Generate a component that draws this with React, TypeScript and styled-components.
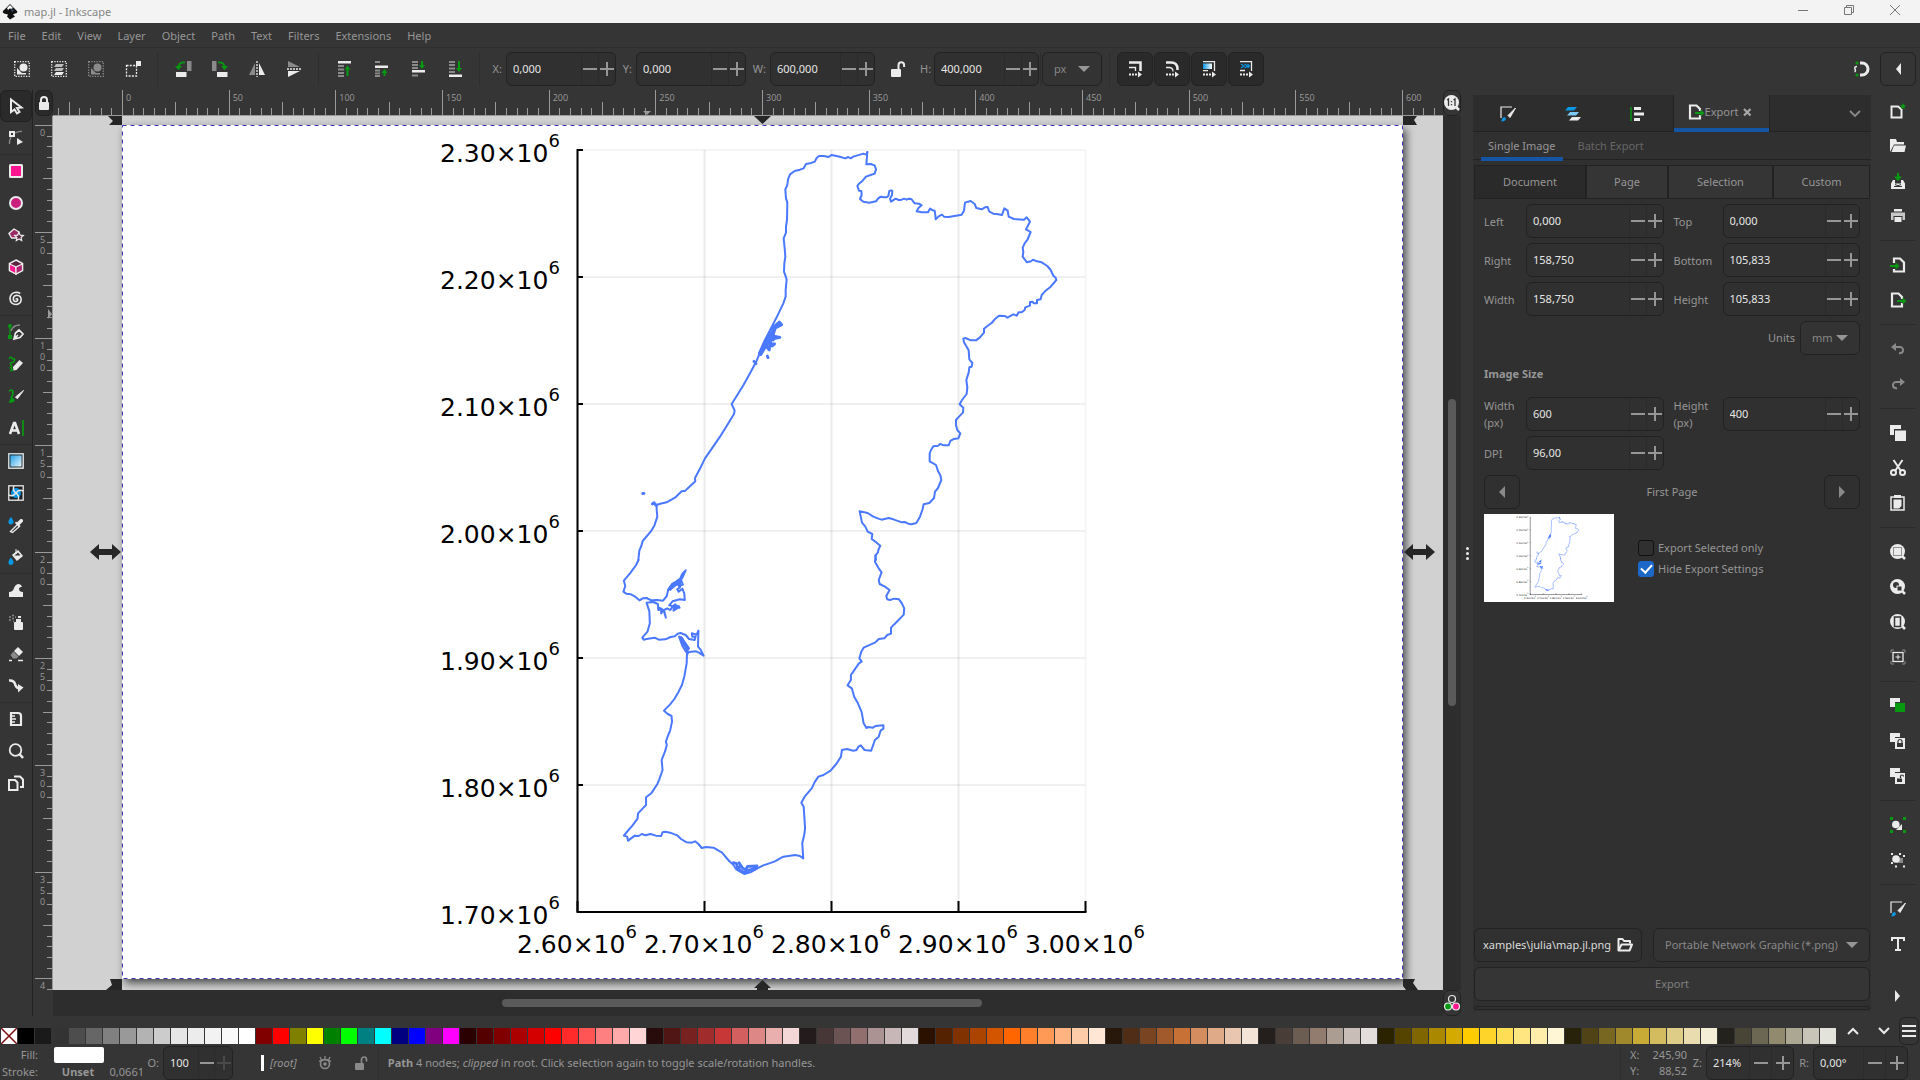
import React, { useEffect, useRef } from 'react';
import styled, { createGlobalStyle } from 'styled-components';

const W = '#ebebeb';
const D = '#8a8a8a';
const G = '#079a10';
const B = '#0a98e6';
const L = '#7cc8f2';
const P = '#ff158f';
const BG = '#353535';

const GlobalStyle = createGlobalStyle`
  * { box-sizing: border-box; }
  body { margin: 0; background: ${BG}; overflow: hidden; }
  body, button, input, select { font-family: "Noto Sans", "Open Sans", sans-serif; font-size: 11px; line-height: 16px; color: #969696; }
  button, input, select { margin: 0; padding: 0; border: 0; background: none; outline: 0; }
  svg { display: block; flex: none; }
`;

/* ---------- icons ---------- */

const lens = (inner: React.ReactNode) => (
  <>
    <circle cx="7.5" cy="7.500" r="7.500" fill={W} />
    <path d="M12 12l3 3" stroke={W} strokeWidth="2.500" />
    {inner}
  </>
);
const brushPaper = (
  <>
    <path d="M1 12V1h11" fill="none" stroke={W} strokeWidth="1.200" />
    <path d="M15.500 2L8 9.500l2 2z" fill={W} stroke={W} />
    <path d="M1.500 15.500q0-4 3-4.500l1.500 1.500q-.5 3-4.500 3z" fill={B} />
  </>
);
const clone = (inner: React.ReactNode) => (
  <>
    <path d="M0 0h10v4H5v5H0z" fill={W} />
    {inner}
  </>
);

const icons: Record<string, React.ReactNode> = {
  selectAll: (<><rect x=".7" y=".7" width="14.600" height="14.600" fill="none" stroke={W} strokeWidth="1.300" strokeDasharray="1.300 1.300" /><path d="M3 7l5 5h4v1.500H3z" fill={W} /><circle cx="9.500" cy="6.500" r="4" fill={W} /></>),
  selectLayers: (<><rect x=".7" y=".7" width="14.600" height="14.600" fill="none" stroke={W} strokeWidth="1.300" strokeDasharray="1.300 1.300" /><path d="M5 3h8l-2 3H3zM5 7h8l-2 3H3z" fill="#bbb" /><path d="M5 11h8l-2 3H3z" fill={W} /></>),
  deselect: (<><rect x=".7" y=".7" width="14.600" height="14.600" fill="none" stroke={D} strokeWidth="1.300" strokeDasharray="1.300 1.300" /><path d="M3 7l5 5h4v1.500H3z" fill={D} /><circle cx="9.500" cy="6.500" r="4" fill={D} /></>),
  touch: (<><rect x="1.500" y="4.500" width="10" height="10.500" fill="none" stroke={W} strokeWidth="1.300" strokeDasharray="2 1.300" /><rect x="11" y="0" width="5" height="5" fill={W} /></>),
  rotateL: (<><rect x="12" y="0" width="4.500" height="10" fill={D} /><rect x="1" y="11" width="10.500" height="5" fill={W} /><path d="M10 1.500Q4 1 3.500 6" fill="none" stroke={G} strokeWidth="1.800" /><path d="M0 5h7L3.500 9z" fill={G} /></>),
  rotateR: (<><rect x="0" y="0" width="4.500" height="10" fill={D} /><rect x="5" y="11" width="10.500" height="5" fill={W} /><path d="M6 1.500Q12 1 12.500 6" fill="none" stroke={G} strokeWidth="1.800" /><path d="M9 5h7l-3.500 4z" fill={G} /></>),
  flipH: (<><path d="M6 2v12H0z" fill={D} /><path d="M10 2v12h6z" fill={W} /><path d="M8 0v16" stroke={W} strokeWidth="1.300" strokeDasharray="2 1" /></>),
  flipV: (<><path d="M2 0v6h12z" fill={D} /><path d="M2 10v6l12-6z" fill={W} /><path d="M1 8h15" stroke={W} strokeWidth="1.300" strokeDasharray="2 1" /></>),
  top: (<><rect x="2" y="0" width="13" height="2.500" fill={W} /><path d="M2 5h6M2 8.500h6M2 12h6M2 15h6" stroke={D} strokeWidth="1.800" /><path d="M11.500 15V7" stroke={G} strokeWidth="2" /><path d="M8.500 8.500l3-4 3 4z" fill={G} /></>),
  raise: (<><rect x="2" y="4.500" width="13" height="2.500" fill={W} /><path d="M2 1h5M2 9.500h5M2 12.300h5M2 15h5" stroke={D} strokeWidth="1.800" /><path d="M11.500 15v-4" stroke={G} strokeWidth="2" /><path d="M8.500 12l3-4 3 4z" fill={G} /></>),
  lower: (<><rect x="2" y="9" width="13" height="2.500" fill={W} /><path d="M2 1h6M2 4h6M2 7h6M2 14.500h6" stroke={D} strokeWidth="1.800" /><path d="M12 0v4" stroke={G} strokeWidth="2" /><path d="M9 4l3 4 3-4z" fill={G} /></>),
  bottom: (<><rect x="2" y="13.500" width="13" height="2.500" fill={W} /><path d="M2 1h6M2 4h6M2 7.500h6M2 11h6" stroke={D} strokeWidth="1.800" /><path d="M12 0v8" stroke={G} strokeWidth="2" /><path d="M9 7l3 4 3-4z" fill={G} /></>),
  lock: (<><rect x="3" y="7" width="10" height="8" rx="1" fill={W} /><path d="M5 7V5a3 3 0 016 0v2" fill="none" stroke={W} strokeWidth="2" /></>),
  unlock: (<><rect x="1" y="8" width="10" height="8" rx="1" fill={W} /><path d="M8.500 8V4a2.800 2.800 0 015.600 0v2" fill="none" stroke={W} strokeWidth="2" /></>),
  scaleStroke: (<><path d="M2 1.500h11.500V10" fill="none" stroke={W} strokeWidth="2.500" /><path d="M2 6.500h6.500V10" fill="none" stroke={W} strokeWidth="1.300" /><path d="M2 13.500h9" stroke={W} strokeWidth="2" strokeDasharray="2 1" /><path d="M11 10.500v6l4-3z" fill={W} /></>),
  scaleCorners: (<><path d="M2 1.500h5q6.500 0 6.500 6.500v1" fill="none" stroke={W} strokeWidth="2.500" /><path d="M2 6.500h3q4 0 4 4" fill="none" stroke={W} strokeWidth="1.300" /><path d="M2 13.500h9" stroke={W} strokeWidth="2" strokeDasharray="2 1" /><path d="M11 10.500v6l4-3z" fill={W} /></>),
  scaleGradient: (<><defs><linearGradient id="gs"><stop stopColor={B} /><stop offset="1" stopColor="#fff" /></linearGradient></defs><rect x="2" y="2.500" width="9" height="5.500" fill="url(#gs)" /><path d="M2 .7h11.500V10M2 9.700h5" fill="none" stroke={W} strokeWidth="1.300" /><path d="M2 13.500h9" stroke={W} strokeWidth="2" strokeDasharray="2 1" /><path d="M11 10.500v6l4-3z" fill={W} /></>),
  scalePattern: (<><path d="M3 3l3 2-3 2M6.500 3l3 2-3 2M9.500 3l2 2-2 2" fill="none" stroke={B} strokeWidth="1.200" /><path d="M2 .7h11.500V10M2 9.500h5" fill="none" stroke={W} strokeWidth="1.300" /><path d="M2 13.500h9" stroke={W} strokeWidth="2" strokeDasharray="2 1" /><path d="M11 10.500v6l4-3z" fill={W} /></>),
  snap: (<><path d="M7 2h2a6 6 0 010 12H7" fill="none" stroke={W} strokeWidth="3" /><circle cx="4" cy="2" r="1.600" fill={G} /><circle cx="4" cy="14" r="1.600" fill={G} /><path d="M4 5.500Q1 5.500 2 8t-.5 2.800" fill="none" stroke={W} strokeWidth="1.500" /></>),
  left: <path d="M11 2v12L6 8z" fill={W} />,
  right: <path d="M5 2v12l5-6z" fill={W} />,
  leftDim: <path d="M11 2v12L5 8z" fill={D} />,
  rightDim: <path d="M5 2v12l6-6z" fill={D} />,
  pointer: <path d="M3 1.500l10.500 8-4.500.5 2.500 4-2.500 1.500-2.500-4L3 14z" fill="none" stroke={W} strokeWidth="2" />,
  node: (<><rect x="2" y="2" width="4" height="4" fill="none" stroke={W} strokeWidth="2" /><path d="M7 3q4-2 7-1.500M3 7q-2 4-1.500 7" fill="none" stroke={D} strokeWidth="1.300" /><path d="M9 8l6 4-6 3z" fill={W} /></>),
  rect: <rect x="2" y="2" width="12" height="12" rx=".5" fill={P} stroke={W} strokeWidth="2" />,
  ellipse: <circle cx="8" cy="8" r="6" fill="#c8207c" stroke={W} strokeWidth="2" />,
  star: (<><path d="M6 2l5 3-1.500 6H3.500L1 6.500z" fill="#9c2868" stroke={W} strokeWidth="1.400" /><path d="M11 5.500l1.300 2.700 3 .3-2.200 2 .6 3-2.700-1.500-2.700 1.500.6-3-2.200-2 3-.3z" fill="#5c2440" stroke={W} strokeWidth="1.200" /></>),
  box: (<><path d="M8 1l6.500 3.500v7L8 15l-6.500-3.500v-7z" fill="#5c2440" stroke={W} strokeWidth="1.500" /><path d="M1.500 5L8 8v7l-6.500-3.500z" fill={P} stroke={W} strokeWidth="1.200" /><path d="M14.500 5L8 8v7l6.500-3.500z" fill="#b42474" stroke={W} strokeWidth="1.200" /></>),
  spiral: <path d="M8 8.500q0-1 1-.7 1.600 1-.2 2.400-2.800 1-3.500-1.700-.2-3.600 3.400-4.200 4.300.2 4.500 4.200-.3 4.600-5 5-5.700-.3-6.200-5.500Q2.200 1.800 8 1.300q2.500 0 4.200 1.200" fill="none" stroke={W} strokeWidth="1.600" />,
  pen: (<><path d="M2 4v8" stroke={G} strokeWidth="1.300" /><rect x="0" y="11" width="4" height="4" fill={G} /><circle cx="2" cy="2" r="2" fill={G} /><path d="M3 7q2-6 9-6" fill="none" stroke={D} strokeWidth="1.300" /><path d="M6 15l1.500-6L11 6l4 4-3 3.500zM6 15l4-4" fill="none" stroke={W} strokeWidth="1.700" /></>),
  pencil: (<><path d="M1 3q1.500-3 3-1t2.500 1Q7 6 4 6.500t-1 2.500-1.500 3" fill="none" stroke={G} strokeWidth="1.500" /><path d="M2 16l1-4.500L6 14z" fill={G} /><path d="M5 11l6.500-7L15 7l-6.500 7-3 .5z" fill={W} /></>),
  calligraphy: (<><path d="M1 3q4-2 4 1t-2 7" fill="none" stroke={G} strokeWidth="1.800" /><path d="M1 15q0-4 4-5l2 2q-1 3-6 3z" fill={G} /><path d="M15.500 2.500L7.500 9l1.800 1.800z" fill={W} stroke={W} /></>),
  text: (<><path d="M2 14L6 3h1l4 11M3.500 10.500h6" fill="none" stroke={W} strokeWidth="2.600" /><path d="M15 0v16" stroke={G} strokeWidth="1.700" /></>),
  gradient: (<><defs><linearGradient id="gt" x2="1" y2="1"><stop stopColor={B} /><stop offset="1" stopColor="#fff" /></linearGradient></defs><rect x=".8" y=".8" width="14.400" height="14.400" fill="url(#gt)" stroke={W} strokeWidth="1.300" /><rect x="2" y="2" width="12" height="12" fill="none" stroke={BG} /></>),
  mesh: (<><rect x=".8" y=".8" width="14.400" height="14.400" fill="#222" stroke={W} strokeWidth="1.300" /><circle cx="8" cy="8" r="5" fill={B} /><path d="M8 8q-4-3-2-7M8 8q3-4 7-2M8 8q4 3 2 7M8 8q-3 4-7 2" fill="none" stroke={W} strokeWidth="1.400" /></>),
  dropper: (<><path d="M3 0q3 4 2.500 5.500T3 7.500.5 5.500 3 0z" fill={B} /><path d="M2.500 14.500l7-7 2 2-7 6z" fill="none" stroke={W} strokeWidth="1.300" /><path d="M9 5.500L12.500 2q3-.5 2.500 2.500L11.500 8l1 1-1.500 1L7 6l1-1.500z" fill={W} /></>),
  bucket: (<><path d="M3 8.500q3 4 2.500 5.500T3 16 .5 14 3 8.500z" fill={B} /><path d="M5 6l5-4 4 5-5 4z" fill={W} stroke={W} strokeWidth="1.500" /><path d="M6.500 6.500h6L10 3.500z" fill={BG} /><path d="M8 0v5" stroke={W} /></>),
  tweak: <path d="M1 15V10q4 0 5-4 1.500-4 5-4 2.500.5 3 3-2.500-.5-3 1.500 0 3.500 4 3.500V15z" fill={W} />,
  spray: (<><rect x="6" y="8" width="9" height="8" rx="1" fill={W} /><rect x="8" y="5" width="5" height="3" fill={W} /><rect x="10" y="2" width="3" height="2" fill={W} /><path d="M1 3h2M4 1.500h2M1 6h2M4 4.500h2M5 7.500h1M7 3h1" stroke={D} strokeWidth="1.500" /></>),
  eraser: (<><path d="M10 1l5 5-4 4-5-5z" fill={W} /><path d="M5.500 5.500l5 5-2 2H5L2.500 9z" fill={D} /><path d="M1 14.500h3M10 14.500h5" stroke={W} strokeWidth="1.600" /></>),
  connector: (<><path d="M1 2.500Q6 2 7 6t4 4.500" fill="none" stroke={W} strokeWidth="2.500" /><path d="M10 6v8.500l5.500-5z" fill={W} /></>),
  measure: (<><path d="M3 2h7q3 0 3 3v9H3z" fill="none" stroke={W} strokeWidth="2.200" /><path d="M3 5h4M3 8h5M3 11h4" stroke={W} strokeWidth="1.300" /></>),
  zoom: (<><circle cx="7.500" cy="7" r="5.800" fill="none" stroke={W} strokeWidth="1.800" /><path d="M11.500 11l3.500 4" stroke={W} strokeWidth="2.500" /></>),
  pages: (<><path d="M1 5h6l2.500 2.500V15H1z" fill="none" stroke={W} strokeWidth="2" /><path d="M6 1.500h6l3 3V12h-3" fill="none" stroke={W} strokeWidth="2" /></>),
  fillStroke: brushPaper,
  layers: (<><path d="M3 1h9l-3 3.500H0z" fill={B} /><path d="M5 6h9l-3 3.500H2z" fill={L} /><path d="M7 11h9l-3 3.500H4z" fill={W} /></>),
  align: (<><path d="M1 1v14" stroke={G} strokeWidth="1.400" /><rect x="4" y="1" width="7" height="3" fill={W} /><rect x="4" y="6.500" width="10" height="3" fill={W} /><rect x="4" y="12" width="6" height="3" fill={W} /></>),
  exportPage: (<><path d="M12 11v3.500H2v-13h6.500L12 5v2" fill="none" stroke={W} strokeWidth="2.200" /><path d="M7 9h6" stroke={G} strokeWidth="2" /><path d="M12.500 5.500l4 3.500-4 3.500z" fill={G} /></>),
  importPage: (<><path d="M4 6V1.500h6l4 4v9H4V12" fill="none" stroke={W} strokeWidth="2.200" /><path d="M0 9h6" stroke={G} strokeWidth="2" /><path d="M5.500 5.500l4 3.500-4 3.500z" fill={G} /></>),
  newDoc: (<><path d="M1.500 3.500H8l3.500 3v8H1.500z" fill="none" stroke={W} strokeWidth="2" /><path d="M13 0l.9 2 2.100.2-1.500 1.500.5 2.300-2-1-2 1 .5-2.300L10 2.200l2.100-.2z" fill={G} /></>),
  folder: (<><path d="M0 14V1h6l1 3h7v2.500H4z" fill={W} /><path d="M4 7.500h12L14.500 14H1.500z" fill={W} /></>),
  save: (<><path d="M8 0v4" stroke={G} strokeWidth="2" /><path d="M4 3.500h8L8 8z" fill={G} /><path d="M3 7L1 10.500V16h14v-5.500L13 7h-2v3.500H5V7z" fill={W} /><path d="M5 11.500q3 2.500 6 0M4 13.500h8" fill="none" stroke={BG} /></>),
  print: (<><rect x="4" y="1" width="8" height="2.500" fill={W} /><path d="M1 4.500h14V12H1z" fill="#c8c8c8" /><rect x="4" y="8.500" width="8" height="6" fill={W} stroke={BG} /></>),
  undo: (<><path d="M4 6h6q3.500.5 3 4-.5 2-4 2.500" fill="none" stroke={D} strokeWidth="2" /><path d="M6 2v8L1 6z" fill={D} /></>),
  redo: (<><path d="M12 6H6q-3.500.5-3 4 .5 2 4 2.500" fill="none" stroke={D} strokeWidth="2" /><path d="M10 2v8l5-4z" fill={D} /></>),
  copy: (<><path d="M0 0h11v4H4v6H0z" fill={W} /><rect x="5" y="5.500" width="11" height="10.500" fill={W} /></>),
  cut: (<><path d="M3.500 0L11 11M12.500 0L5 11" stroke={W} strokeWidth="2" /><circle cx="3.500" cy="12.500" r="2.500" fill="none" stroke={W} strokeWidth="2" /><circle cx="12.500" cy="12.500" r="2.500" fill="none" stroke={W} strokeWidth="2" /></>),
  paste: (<><rect x="1" y="2" width="13" height="13" fill="none" stroke={W} strokeWidth="1.500" /><rect x="4" y="0" width="7" height="3" fill={W} /><path d="M3.500 4.500h8V11l-2.500 2.500H3.500z" fill={W} /></>),
  zoomSel: lens(<rect x="3.500" y="3.500" width="8" height="8" fill="none" stroke={BG} strokeDasharray="1 1" />),
  zoomDraw: lens(<><circle cx="6" cy="6" r="3" fill={BG} /><rect x="7" y="7" width="5" height="5" fill={BG} stroke={W} /></>),
  zoomPage: lens(<rect x="4.500" y="3" width="6" height="9.500" fill="none" stroke={BG} strokeWidth="1.500" />),
  zoomCenter: (<><path d="M1 4V1h3M12 1h3v3M15 12v3h-3M4 15H1v-3" fill="none" stroke={D} /><rect x="3" y="3.500" width="10" height="9" fill="none" stroke={W} strokeWidth="1.300" /><path d="M8 5.500v5M5.500 8h5" stroke={W} /></>),
  duplicate: clone(<rect x="5" y="5" width="10" height="9" fill={G} />),
  cloneLock: clone(<><rect x="5" y="5" width="10" height="11" fill={W} /><rect x="7" y="10" width="6" height="4" fill={BG} /><path d="M8 10V8.500a2 2 0 014 0V10" fill="none" stroke={BG} strokeWidth="1.200" /></>),
  cloneUnlock: clone(<><rect x="5" y="5" width="10" height="11" fill={W} /><rect x="7" y="10.500" width="5" height="3.500" fill={BG} /><path d="M10.500 10V8.500a1.500 1.500 0 013 0" fill="none" stroke={BG} strokeWidth="1.200" /></>),
  group: (<><path d="M0 0h3v3H0zM13 0h3v3h-3zM0 13h3v3H0zM13 13h3v3h-3z" fill={G} /><path d="M12 7v6H6z" fill={W} /><circle cx="5.800" cy="7.500" r="3.800" fill={W} /></>),
  ungroup: (<><path d="M7 6h6v5H7z" fill={D} /><circle cx="6" cy="7" r="3.800" fill={W} /><path d="M1 1h2v2H1zM9 1h2v2H9zM1 10h2v2H1zM13 3h2v2h-2zM5 13.500h2v2H5zM13 13.500h2v2h-2z" fill={W} /></>),
  textDialog: <path d="M2 5V2h12v3M8 2v12M5 14h6" fill="none" stroke={W} strokeWidth="2" />,
  oneToOne: (<>{lens(<path d="M3 5l1.500-1v7M9.500 5L11 4v7" fill="none" stroke={BG} strokeWidth="1.300" />)}<path d="M7.500 6v1.200M7.500 9v1.200" stroke={BG} strokeWidth="1.300" /></>),
  cms: (<><circle cx="8" cy="4" r="3.500" fill="none" stroke={W} strokeWidth="1.200" /><circle cx="4" cy="11.500" r="3.500" fill={G} stroke={W} strokeWidth="1.200" /><circle cx="12" cy="11.500" r="3.500" fill={P} stroke={W} strokeWidth="1.200" /></>),
  openFolder: (<><path d="M1.500 13V2h4l1.500 2h6v2.500" fill="none" stroke={W} strokeWidth="2" strokeLinejoin="round" /><path d="M1.500 13.500l3-6H15l-2.500 6z" fill="none" stroke={W} strokeWidth="2" strokeLinejoin="round" /></>),
  close: <path d="M5 5l6.500 6.500M11.500 5L5 11.500" stroke="#a8a8a8" strokeWidth="2.200" />,
  chevron: <path d="M3 6l5 5 5-5" fill="none" stroke={D} strokeWidth="1.800" />,
  up: <path d="M3 11l5-5 5 5" fill="none" stroke={W} strokeWidth="2" />,
  down: <path d="M3 5l5 5 5-5" fill="none" stroke={W} strokeWidth="2" />,
  menu: <path d="M1 3h14M1 8h14M1 13h14" stroke={W} strokeWidth="2" />,
  eye: (<><circle cx="8" cy="9" r="4.500" fill="none" stroke={D} strokeWidth="1.600" /><circle cx="8" cy="9" r="1.800" fill={D} /><path d="M8 1v3M3 2l1.500 3M13 2l-1.500 3M2 6.500q6-4 12 0" fill="none" stroke={D} strokeWidth="1.300" /></>),
  unlockDim: (<><rect x="2" y="8" width="9" height="7" rx="1" fill={D} /><path d="M8.500 8V4.500a2.500 2.500 0 015 0v2" fill="none" stroke={D} strokeWidth="1.700" /></>),
  minus: <path d="M1 8h14" stroke="#969696" strokeWidth="2" />,
  plus: <path d="M1 8h14M8 1v14" stroke="#969696" strokeWidth="2" />,
};

const Icon = ({ name, size = 16 }: { name: string; size?: number }) => (
  <svg width={size} height={size} viewBox="0 0 16 16" aria-hidden="true" overflow="visible">{icons[name]}</svg>
);

/* ---------- shell ---------- */

const Window = styled.div`
  display: flex;
  flex-direction: column;
  height: 100vh;
  background: ${BG};
`;
const TitleBar = styled.header`
  display: flex;
  align-items: center;
  height: 23px;
  padding: 0 2px;
  background: #f3f3f3;
  color: #868686;
`;
const Title = styled.span`
  flex: 1;
  padding: 1px 0 0 6px;
`;
const WindowButton = styled.button`
  display: flex;
  align-self: flex-start;
  width: 46px;
  height: 20px;
  justify-content: center;
  align-items: center;
`;
const MenuBar = styled.nav`
  display: flex;
  height: 25px;
  border-bottom: 1px solid #2e2e2e;
`;
const MenuItem = styled.button`
  padding: 1px 8px 0;
`;
const Toolbar = styled.div`
  display: flex;
  align-items: center;
  height: 42px;
  padding: 0 4px 0 3px;
`;
const ToolButton = styled.button<{ $w: number; $h: number; $framed?: boolean; $active?: boolean }>`
  display: flex;
  flex: none;
  align-items: center;
  justify-content: center;
  width: ${(p) => p.$w}px;
  height: ${(p) => p.$h}px;
  border-radius: 6px;
  border: ${(p) => (p.$framed ? '1px solid #222' : '0')};
  background: ${(p) => (p.$active ? '#2a2a2a' : 'transparent')};
`;
const VRule = styled.div<{ $m: number }>`
  width: 1px;
  height: 34px;
  margin: 0 ${(p) => p.$m}px;
  background: #2e2e2e;
`;
const Grow = styled.div`
  flex: 1;
`;
const FieldLabel = styled.label<{ $w: number }>`
  flex: none;
  width: ${(p) => p.$w}px;
  padding-right: 4px;
  text-align: right;
`;
const ButtonPack = styled.div`
  display: flex;
  gap: 1px;
`;

const SpinFrame = styled.div<{ $w?: number }>`
  display: flex;
  flex: none;
  width: ${(p) => (p.$w ? `${p.$w}px` : 'auto')};
  height: 34px;
  border: 1px solid #222;
  border-radius: 6px;
  background: #303030;
  overflow: hidden;
`;
const SpinInput = styled.input`
  flex: 1;
  width: 0;
  min-width: 0;
  padding-left: 6px;
  color: #e6e6e6;
`;
const SpinButton = styled.button<{ $w: number }>`
  display: flex;
  align-items: center;
  justify-content: center;
  width: ${(p) => p.$w}px;
  border-left: 1px solid #2b2b2b;
  &:disabled { opacity: 0.25; }
`;
const Spin = ({ id, value, w, bw = 17, maxed }: { id: string; value: string; w?: number; bw?: number; maxed?: boolean }) => (
  <SpinFrame $w={w}>
    <SpinInput id={id} defaultValue={value} />
    <SpinButton $w={bw} aria-label="Decrease"><Icon name="minus" /></SpinButton>
    <SpinButton $w={bw} aria-label="Increase" disabled={maxed}><Icon name="plus" /></SpinButton>
  </SpinFrame>
);

const SelectFrame = styled.div<{ $w?: number; $grow?: boolean }>`
  position: relative;
  flex: ${(p) => (p.$grow ? '1' : 'none')};
  width: ${(p) => (p.$w ? `${p.$w}px` : 'auto')};
  height: 34px;
  border: 1px solid #222;
  border-radius: 6px;
  background: #333;
  svg { position: absolute; right: 11px; top: 12px; pointer-events: none; }
  select { appearance: none; width: 100%; height: 100%; padding-left: 11px; color: #888; }
`;
const Drop = ({ label, value, w, grow }: { label: string; value: string; w?: number; grow?: boolean }) => (
  <SelectFrame $w={w} $grow={grow}>
    <select id={label} aria-label={label} defaultValue={value}><option>{value}</option></select>
    <svg width="12" height="8" viewBox="0 0 12 8"><path d="M0 1h12L6 7z" fill="#969696" /></svg>
  </SelectFrame>
);

const Main = styled.main`
  display: flex;
  flex: 1;
  min-height: 0;
`;
const Toolbox = styled.div`
  width: 33px;
  border-right: 1px solid #232323;
`;
const HRule = styled.div`
  height: 1px;
  background: #2e2e2e;
`;
const Editor = styled.section`
  display: grid;
  flex: 1;
  min-width: 0;
  grid-template-columns: 20px minmax(0, 1fr) 18px;
  grid-template-rows: 26px minmax(0, 1fr) 26px;
`;
const GuideLock = styled.div`
  padding-left: 2px;
`;
const RulerSvg = styled.svg`
  width: 100%;
  height: 100%;
  overflow: hidden;
  text { fill: #9a9a9a; font-family: "Open Sans", sans-serif; font-size: 9px; }
`;
const Canvas = styled.div`
  overflow: hidden;
  background: #d1d1d1;
  svg { width: 100%; height: 100%; }
`;
const VTrack = styled.div`
  display: flex;
  flex-direction: column;
  padding: 283px 5px 0;
  background: #2d2d2d;
`;
const HTrack = styled.div`
  grid-column: 1 / 3;
  margin-left: 20px;
  padding: 9px 0 0 449px;
  background: #2d2d2d;
`;
const Thumb = styled.div<{ $horizontal?: boolean }>`
  width: ${(p) => (p.$horizontal ? '51%' : '8px')};
  height: ${(p) => (p.$horizontal ? '8px' : '307px')};
  border-radius: 4px;
  background: #5a5a5a;
`;
const DockHandle = styled.div`
  display: flex;
  flex-direction: column;
  width: 12px;
  align-items: center;
  justify-content: center;
  gap: 2px;
`;
const Dot = styled.i`
  width: 3px;
  height: 3px;
  border-radius: 2px;
  background: ${W};
`;

/* ---------- dock ---------- */

const Dock = styled.aside`
  display: flex;
  flex-direction: column;
  width: 398px;
  margin: 5px 0;
  background: #303030;
`;
const DockTabs = styled.div`
  display: flex;
  align-items: stretch;
  height: 37px;
  background: #2d2d2d;
  border-bottom: 1px solid #222;
`;
const DockTab = styled.button<{ $active?: boolean }>`
  display: flex;
  align-items: center;
  justify-content: center;
  width: ${(p) => (p.$active ? '95px' : '65px')};
  height: 37px;
  gap: 1px;
  border-bottom: ${(p) => (p.$active ? '4px solid #1555a5' : '0')};
  background: ${(p) => (p.$active ? '#353535' : 'none')};
  box-shadow: ${(p) => (p.$active ? '-1px 0 #222, 1px 0 #222' : 'none')};
`;
const IconTabs = styled.div`
  display: flex;
  padding: 0 4px 0 2px;
`;
const SubTabs = styled.div`
  display: flex;
  height: 28px;
  padding-left: 8px;
  gap: 8px;
  border-bottom: 1px solid #222;
`;
const SubTab = styled.button<{ $active?: boolean }>`
  height: 29px;
  padding: 3px 7px 0;
  border-bottom: 4px solid ${(p) => (p.$active ? '#1555a5' : 'transparent')};
  color: ${(p) => (p.$active ? '#969696' : '#666')};
`;
const Segments = styled.div`
  display: grid;
  grid-template-columns: 112fr 82fr 105fr 97fr;
  height: 34px;
  margin: 5px 1px;
`;
const Segment = styled.button<{ $active?: boolean }>`
  border: 1px solid #222;
  background: ${(p) => (p.$active ? '#2a2a2a' : '#353535')};
`;
const Form = styled.div`
  display: grid;
  grid-template-columns: 42px 1fr 59px 1fr;
  row-gap: 5px;
  padding: 0 11px;
  align-items: center;
`;
const FormLabel = styled.label<{ $second?: boolean }>`
  padding-left: ${(p) => (p.$second ? '10px' : '0')};
  line-height: 17px;
`;
const UnitsRow = styled.div`
  display: flex;
  grid-column: 1 / -1;
  justify-content: flex-end;
  align-items: center;
  gap: 5px;
`;
const Heading = styled.h2`
  grid-column: 1 / -1;
  height: 32px;
  margin: 0;
  padding-top: 6px;
  font-size: 11px;
  line-height: 16px;
  font-weight: 700;
`;
const PageNav = styled.div`
  display: flex;
  align-items: center;
  justify-content: space-between;
  padding: 5px 11px;
`;
const PreviewRow = styled.div`
  display: flex;
  align-items: center;
  padding-left: 11px;
  gap: 24px;
`;
const Preview = styled.div`
  width: 130px;
  height: 88px;
  background: #fff;
`;
const Checks = styled.div`
  display: flex;
  flex-direction: column;
  gap: 5px;
`;
const Check = styled.label`
  display: flex;
  align-items: center;
  gap: 4px;
  height: 16px;
`;
const Tick = styled.input`
  appearance: none;
  width: 16px;
  height: 16px;
  border: 1px solid #111;
  border-radius: 3px;
  &:checked { background: #1b68c9; border-color: #1b68c9; }
  &:checked::after { content: ''; display: block; width: 5px; height: 9px; margin: 0 0 0 4px; border: solid #fff; border-width: 0 2px 2px 0; transform: rotate(42deg); }
`;
const FileRow = styled.div`
  display: flex;
  gap: 11px;
  padding: 0 1px;
`;
const FileBox = styled.div`
  display: flex;
  align-items: center;
  width: 168px;
  height: 34px;
  padding: 0 8px;
  gap: 6px;
  border: 1px solid #222;
  border-radius: 6px;
`;
const FileInput = styled.input`
  flex: 1;
  min-width: 0;
  color: #dcdcdc;
`;
const ExportButton = styled.button`
  height: 34px;
  margin: 5px 1px;
  border: 1px solid #222;
  border-radius: 6px;
  background: #353535;
  color: #808080;
`;
const Progress = styled.div`
  height: 4px;
  margin: 0 1px 1px;
  border: 1px solid #222;
  border-radius: 2px;
`;
const Commands = styled.div`
  display: flex;
  flex-direction: column;
  align-items: center;
  width: 49px;
  padding: 3px 0 3px 4px;
`;
const RuleWide = styled.div`
  width: 36px;
  height: 1px;
  margin: 7px 0 6px;
  background: #2b2b2b;
`;

/* ---------- footer ---------- */

const Palette = styled.div`
  display: flex;
  align-items: center;
  height: 30px;
  padding: 0 1px;
`;
const Swatches = styled.div`
  display: flex;
  flex: 1;
  gap: 1px;
  padding-top: 10px;
`;
const Swatch = styled.button<{ $c: string }>`
  width: 16px;
  height: 16px;
  background: ${(p) => p.$c};
`;
const StatusBar = styled.footer`
  display: flex;
  align-items: center;
  height: 34px;
  padding-right: 12px;
`;
const StyleGrid = styled.div`
  display: grid;
  grid-template-columns: 38px 66px 40px;
  grid-template-rows: 17px 17px;
  align-items: center;
  justify-items: end;
`;
const FillSwatch = styled.button`
  width: 50px;
  height: 16px;
  border-radius: 2px;
  background: #fff;
`;
const Unset = styled.b`
  justify-self: center;
  padding-left: 14px;
`;
const LayerName = styled.em`
  margin: 0 20px 0 28px;
  padding-left: 6px;
  border-left: 3px solid #fff;
`;
const LayerToggles = styled.div`
  display: flex;
  gap: 20px;
`;
const Message = styled.span`
  white-space: nowrap;
`;
const Pair = styled.div`
  display: flex;
  justify-content: space-between;
  width: 57px;
`;

/* ---------- document drawing ---------- */

const NORTH_EAST = 'M802 96L801 110 799 133 812 132 824 136 828 148 824 161 812 165 798 170 788 182 776 192 772 198 777 212 784 213 785 225 780 237 790 245 808 248 828 244 834 236 842 230 852 232 860 232 865 228 868 213 873 211 877 213 876 225 870 236 873 245 887 236 896 240 905 239 912 236 920 239 926 236 934 237 944 250 957 251 965 256 956 263 950 274 965 277 984 277 990 266 998 271 1004 272 1006 285 1007 298 1016 289 1026 284 1032 290 1046 291 1068 287 1085 284 1092 272 1095 248 1104 245 1112 243 1124 252 1129 264 1145 268 1155 262 1163 261 1168 275 1180 281 1190 282 1206 285 1213 265 1223 272 1226 290 1242 297 1272 299 1280 292 1290 305 1278 328 1292 336 1282 360 1274 370 1268 383 1270 396 1268 410 1281 427 1293 424 1299 419 1308 423 1325 427 1342 438 1352 450 1360 467 1367 473 1369 480 1352 500 1335 514 1325 525 1322 538 1311 540 1311 550 1301 550 1298 545 1290 546 1290 557 1276 562 1274 570 1265 577 1256 577 1250 587 1240 583 1222 593 1215 588 1197 587 1186 596 1175 609 1162 618 1152 626 1152 638 1140 652 1128 661 1113 661 1096 654 1090 656 1092 667 1099 679 1106 691 1108 718 1117 729 1115 740 1108 742 1106 758 1099 780 1102 802 1100 822 1086 840 1079 853 1090 863 1089 878 1074 893 1068 900 1068 916 1072 930 1081 940 1075 955 1062 957 1051 963 1046 976 1032 976 1020 972 1015 977 1000 979 993 990 989 1000 989 1024 1008 1035 1014 1053 1021 1066 1024 1080 1014 1104 1005 1115 1002 1134 988 1149 971 1153 967 1170 960 1190 949 1209 935 1213 925 1211 914 1206 906 1207 880 1198 866 1194 845 1199 835 1196 820 1190 803 1179 779 1174 786 1208 796 1220 803 1235 817 1242 815 1257 830 1268 841 1277 835 1290 834 1297 826 1306 828 1320';
const NORTH_WEST = 'M802 96L800 104 790 101 780 104 760 110 752 115 745 111 735 115 722 111 710 108 694 105 686 111 672 108 657 108 650 114 644 125 630 130 618 132 611 145 600 149 584 153 570 163 564 178 562 195 556 208 558 235 562 248 561 300 558 320 558 338 551 355 554 385 556 410 553 430 552 455 560 478 557 510 557 530 550 550 530 592 500 650 470 722 450 760 430 796 410 828 395 852 404 872 402 882 380 918 360 950 340 979 315 1015 303 1040 285 1074 286 1084 262 1106 256 1112 245 1114 225 1133 200 1147 178 1152 170 1155 158 1150M170 1155L170 1170 172 1190 163 1217 152 1235 128 1263 124 1278 118 1292 115 1320';
const LAGOON = 'M515 626L538 606 545 614 526 624 518 648 540 652 522 656 520 640 506 650 492 676 510 660 508 690 498 678 482 704 478 700 496 660 514 636 512 672 524 672M502 708L504 713M516 678L522 674M462 724L468 731M128 1121L132 1120M157 1152L162 1148 168 1156M538 610L541 611M518 630L520 660M504 656L500 676';
const SOUTH_WEST = 'M463 60L458 75 445 100 432 122 435 138 431 155 437 161 447 163 456 170 465 181 472 175 480 174 490 181 503 180 515 182 523 168 526 148 534 132 543 125 550 120 556 101 563 91 557 110 553 120 557 134 549 138 545 125 530 148 544 133 550 122 551 142 545 148 548 155 556 146 560 160 561 180 551 178 535 184 528 196 540 200 537 212 547 203 550 203 540 193 530 210 524 205 517 210 521 233 516 210 511 220 511 208 505 210 504 192 494 186 480 188 486 214 487 250 482 275 471 293 474 299 480 297 497 293 506 299 520 298 531 291 540 289 546 281 552 279 563 285 570 297 582 300 584 290 577 290 576 280 586 284 590 272 589 320 594 328 601 347 590 337 585 334 570 336 566 342 566 325 560 312 549 290 556 318 564 336 570 325 560 305 553 291M566 335L565 370 560 410 555 435 548 455 539 477 530 493 517 512 525 522 533 528 534 545 530 572 526 585 521 605 523 615 519 635 512 660 514 690 507 718 503 732 490 760 479 772 479 795 472 805 462 820 461 836 450 857 440 873 432 887 439 890 441 902 455 887 463 888 470 882 478 886 488 882 500 887 511 888 514 877 520 875 530 878 545 886 553 897 565 907 576 908 583 904 590 912 597 924 606 921 622 923 640 938 655 963 664 974 670 988 687 1002 700 997 715 985 726 977 740 970 752 964 763 955 770 950 795 945 805 948 812 955 810 910 814 885 816 865 813 800 808 788 815 770 830 745 836 727 844 710 855 705 870 692 882 672 892 650 894 630 905 627 918 632 925 630 929 620 934 616 942 630 956 632 964 600 972 590 976 572 982 566 982 556 965 558 960 563 950 561 946 564 940 550 936 517 928 490 920 470 915 445 906 436 913 420 913 405 918 395 930 370 936 365 931 355 935 335 940 323 965 307 972 297 984 295 990 285 998 281 998 263 1012 243 1025 224 1026 205 1021 190 1015 178 1005 176 996 180 990 178 988 168 995 150 985 140 974 132 972 120 978 97 972 85 964 65 966 45';
const ESTUARIES = 'M552 293L558 310 566 328M548 120L534 140 530 148M548 135L552 125M555 296L562 318M512 208L506 204M536 200L548 200M664 968L670 970 674 985 680 978 676 968 684 985 690 990 694 979 714 978 712 986 698 990 690 998 684 996 672 984';

const YTICKS = ['2.30', '2.20', '2.10', '2.00', '1.90', '1.80', '1.70'];
const XTICKS = ['2.60', '2.70', '2.80', '2.90', '3.00'];

const Plot = ({ stroke, coast }: { stroke: number; coast: number }) => (
  <g fontFamily="DejaVu Sans, sans-serif" fontSize="25">
    <g stroke="#000" strokeWidth="2">
      {XTICKS.map((t, i) => <path key={t} strokeOpacity={i === 4 ? 0.04 : 0.08} d={`M${577.5 + i * 127} 150V912`} />)}
      {YTICKS.map((t, i) => <path key={t} strokeOpacity={i === 0 ? 0.04 : 0.06} d={`M577 ${150 + i * 127}H1085`} />)}
    </g>
    <path d="M577.500 149V912H1086.500" fill="none" stroke="#000" strokeWidth={stroke} />
    {XTICKS.map((t, i) => (
      <g key={t}>
        <path d={`M${577.5 + i * 127} 901v11`} stroke="#000" strokeWidth={stroke} />
        <text x={517 + i * 127} y="953">{t}×10<tspan fontSize="18" dy="-15">6</tspan></text>
      </g>
    ))}
    {YTICKS.map((t, i) => (
      <g key={t}>
        <path d={`M577 ${150 + i * 127}h6`} stroke="#000" strokeWidth={stroke} />
        <text x="440" y={162 + i * 127}>{t}×10<tspan fontSize="18" dy="-15">6</tspan></text>
      </g>
    ))}
    <g fill="none" stroke="#4a78ff" strokeLinejoin="round" strokeLinecap="round" strokeWidth={coast}>
      <g transform="translate(600 120) scale(.33333)">
        {[NORTH_EAST, NORTH_WEST].map((d) => <path key={d} d={d} vectorEffect="non-scaling-stroke" />)}
        <path d={LAGOON} strokeWidth={coast * 1.4} vectorEffect="non-scaling-stroke" />
      </g>
      <g transform="translate(420 540) scale(.47194 .33333)">
        <path d={SOUTH_WEST} vectorEffect="non-scaling-stroke" />
        <path d={ESTUARIES} strokeWidth={coast * 1.4} vectorEffect="non-scaling-stroke" />
      </g>
    </g>
  </g>
);

const Scene = () => (
  <svg role="img" aria-label="Document canvas">
    <defs>
      <filter id="shade" x="-5%" y="-5%" width="110%" height="110%">
        <feDropShadow dx="3" dy="4" stdDeviation="4" floodOpacity=".65" />
      </filter>
    </defs>
    <g transform="translate(-53 -116)">
      <rect x="122" y="125" width="1281" height="854" fill="#fff" filter="url(#shade)" />
      <Plot stroke={2} coast={2} />
      <rect x="122.500" y="125.500" width="1280" height="853" fill="none" stroke="#3a34b8" strokeDasharray="4 4" />
      <g fill="#262626">
        <path d="M90 552l9-8v5h13v-5l9 8-9 8v-5H99v5z" />
        <path d="M1404 552l9-8v5h13v-5l9 8-9 8v-5h-13v5z" />
        <path d="M754 116h17l-8.500 8z" />
        <path d="M762.500 980l8.500 8h-3v2h-11v-2h-3z" />
        <path d="M108 116h14v9h-13l4-4z" />
        <path d="M1403 116h14l-3 4 3 5h-14z" />
        <path d="M106 990l6-5-2-6h12v11z" />
        <path d="M1403 979h12l-2 4 5 7h-12l-3-4z" />
      </g>
    </g>
  </svg>
);

const UNIT = 32 / 15;
const ticks = Array.from({ length: 260 }, (_, i) => (i - 14) * 5);

const HRuler = () => (
  <RulerSvg aria-hidden="true">
    {ticks.map((t) => {
      const x = Math.round(69 + t * UNIT) + 0.5;
      const top = t % 50 === 0 ? 0 : t % 25 === 0 ? 12 : 18;
      return x > 0 && x < 1390 ? <path key={t} d={`M${x} ${top}V25`} stroke="#9a9a9a" /> : null;
    })}
    {ticks.filter((t) => t % 50 === 0 && t >= 0 && t <= 600).map((t) => <text key={t} x={73 + t * UNIT} y="11">{t}</text>)}
    <path d="M590 21h8l-4 4z" fill="#9a9a9a" />
    <path d="M0 25.500H3000" stroke="#9a9a9a" />
  </RulerSvg>
);
const VRuler = () => (
  <RulerSvg aria-hidden="true">
    {ticks.map((t) => {
      const y = Math.round(9 + t * UNIT) + 0.5;
      const x = t % 50 === 0 ? 2 : t % 25 === 0 ? 10 : 14;
      return t >= 0 ? <path key={t} d={`M${x} ${y}H19`} stroke="#9a9a9a" /> : null;
    })}
    {['0', '50', '100', '150', '200', '250', '300', '350', '4'].map((label, n) => (
      <text key={label}>{label.split('').map((c, i) => <tspan key={i} x="7" y={20 + Math.round(n * 50 * UNIT) + i * 11}>{c}</tspan>)}</text>
    ))}
    <path d="M15 193v10l4-5z" fill="#9a9a9a" />
    <path d="M19.500 0V3000" stroke="#9a9a9a" />
  </RulerSvg>
);

const COLORS = `000000 1a1a1a 333333 4d4d4d 666666 808080 999999 b3b3b3 cccccc e6e6e6 ececec f2f2f2 f9f9f9 ffffff
800000 ff0000 808000 ffff00 008000 00ff00 008080 00ffff 000080 0000ff 800080 ff00ff
2b0000 550000 800000 aa0000 d40000 ff0000 ff2a2a ff5555 ff8080 ffaaaa ffd5d5
280b0b 501616 782121 a02c2c c83737 d35f5f de8787 e9afaf f4d7d7 241c1c 483737 6c5353 916f6f ac9393 c8b7b7 e3dbdb
2b1100 552200 803300 aa4400 d45500 ff6600 ff7f2a ff9955 ffb380 ffccaa ffe6d5
28170b 502d16 784421 a05a2c c87137 d38d5f deaa87 e9c6af f4e3d7 241f1c 483e37 6c5d53 917c6f ac9d93 c8beb7 e3dedb
2b2200 554400 806600 aa8800 d4aa00 ffcc00 ffd42a ffdd55 ffe680 ffeeaa fff6d5
28220b 504416 786721 a0892c c8ab37 d3bc5f decd87 e9ddaf f4eed7 24221c 484537 6c6753 918a6f aca793 c8c4b7 e3e2db`.split(/\s+/);

const TOOLBAR = [['selectAll', 'selectLayers', 'deselect', 'touch'], ['rotateL', 'rotateR', 'flipH', 'flipV'], ['top', 'raise', 'lower', 'bottom']];
const TOOLS = [['pointer', 'node'], ['rect', 'ellipse', 'star', 'box', 'spiral'], ['pen', 'pencil', 'calligraphy', 'text'], ['gradient', 'mesh', 'dropper', 'bucket'], ['tweak', 'spray', 'eraser', 'connector'], ['measure', 'zoom', 'pages']];
const COMMANDS = [['newDoc', 'folder', 'save', 'print'], ['importPage', 'exportPage'], ['undo', 'redo'], ['copy', 'cut', 'paste'], ['zoomSel', 'zoomDraw', 'zoomPage', 'zoomCenter'], ['duplicate', 'cloneLock', 'cloneUnlock'], ['group', 'ungroup'], ['fillStroke', 'textDialog']];
const MENUS = ['File', 'Edit', 'View', 'Layer', 'Object', 'Path', 'Text', 'Filters', 'Extensions', 'Help'];

const Field = ({ label, value, second }: { label: string; value: string; second?: boolean }) => (
  <>
    <FormLabel htmlFor={`f-${label}`} $second={second}>{label}</FormLabel>
    <Spin id={`f-${label}`} value={value} />
  </>
);

const FileName = () => {
  const ref = useRef<HTMLInputElement>(null);
  useEffect(() => {
    if (ref.current) ref.current.scrollLeft = ref.current.scrollWidth;
  }, []);
  return <FileInput ref={ref} aria-label="File name" defaultValue={'xamples\\julia\\map.jl.png'} />;
};

const ExportDock = () => (
  <Dock>
    <DockTabs>
      <IconTabs>
        <DockTab aria-label="Fill and stroke"><Icon name="fillStroke" /></DockTab>
        <DockTab aria-label="Layers"><Icon name="layers" /></DockTab>
        <DockTab aria-label="Align"><Icon name="align" /></DockTab>
      </IconTabs>
      <DockTab $active><Icon name="exportPage" />Export<Icon name="close" /></DockTab>
      <Grow />
      <ToolButton $w={32} $h={36} aria-label="Dialogs"><Icon name="chevron" /></ToolButton>
    </DockTabs>
    <SubTabs>
      <SubTab $active>Single Image</SubTab>
      <SubTab>Batch Export</SubTab>
    </SubTabs>
    <Segments>
      <Segment $active>Document</Segment>
      <Segment>Page</Segment>
      <Segment>Selection</Segment>
      <Segment>Custom</Segment>
    </Segments>
    <Form>
      <Field label="Left" value="0,000" />
      <Field label="Top" value="0,000" second />
      <Field label="Right" value="158,750" />
      <Field label="Bottom" value="105,833" second />
      <Field label="Width" value="158,750" />
      <Field label="Height" value="105,833" second />
      <UnitsRow><label htmlFor="Units">Units</label><Drop label="Units" value="mm" w={60} /></UnitsRow>
      <Heading>Image Size</Heading>
      <Field label="Width (px)" value="600" />
      <Field label="Height (px)" value="400" second />
      <Field label="DPI" value="96,00" />
    </Form>
    <PageNav>
      <ToolButton $w={36} $h={34} $framed aria-label="Previous page"><Icon name="leftDim" /></ToolButton>
      First Page
      <ToolButton $w={36} $h={34} $framed aria-label="Next page"><Icon name="rightDim" /></ToolButton>
    </PageNav>
    <PreviewRow>
      <Preview>
        <svg width="130" height="88" viewBox="122 125 1281 854" aria-hidden="true"><Plot stroke={4} coast={0.5} /></svg>
      </Preview>
      <Checks>
        <Check><Tick type="checkbox" />Export Selected only</Check>
        <Check><Tick type="checkbox" defaultChecked />Hide Export Settings</Check>
      </Checks>
    </PreviewRow>
    <Grow />
    <FileRow>
      <FileBox><FileName /><Icon name="openFolder" /></FileBox>
      <Drop label="Format" value="Portable Network Graphic (*.png)" grow />
    </FileRow>
    <ExportButton>Export</ExportButton>
    <Progress />
  </Dock>
);

export default function App() {
  return (
    <Window>
      <GlobalStyle />
      <TitleBar>
        <svg width="16" height="18" viewBox="0 0 16 18"><path d="M8 1l7 7q1 2-2 2.500l-2 1 2 2-5 3-3-3 1-2-4-1Q0 9 1 8z" fill="#111" /><path d="M8 2l3 3-2 1-1-.8L6 7 5 5z" fill="#fff" /><path d="M9 6l3 1-2 2z" fill="#38547c" /></svg>
        <Title>map.jl - Inkscape</Title>
        <WindowButton aria-label="Minimize"><svg width="10" height="10"><path d="M0 5.500h10" stroke="#777" /></svg></WindowButton>
        <WindowButton aria-label="Restore"><svg width="10" height="10"><path d="M.5 2.500h7v7h-7zM2.500 2V.5h7v7H8" fill="none" stroke="#777" /></svg></WindowButton>
        <WindowButton aria-label="Close"><svg width="10" height="10"><path d="M0 0l10 10M10 0L0 10" stroke="#777" /></svg></WindowButton>
      </TitleBar>
      <MenuBar>{MENUS.map((m) => <MenuItem key={m}>{m}</MenuItem>)}</MenuBar>
      <Toolbar>
        {TOOLBAR.map((group, g) => (
          <React.Fragment key={g}>
            {group.map((n) => <ToolButton key={n} $w={37} $h={34} aria-label={n}><Icon name={n} /></ToolButton>)}
            <VRule $m={6} />
          </React.Fragment>
        ))}
        <FieldLabel htmlFor="x" $w={20}>X:</FieldLabel><Spin id="x" value="0,000" w={110} />
        <FieldLabel htmlFor="y" $w={20}>Y:</FieldLabel><Spin id="y" value="0,000" w={110} />
        <FieldLabel htmlFor="w" $w={24}>W:</FieldLabel><Spin id="w" value="600,000" w={105} />
        <ToolButton $w={45} $h={34} aria-label="Lock ratio"><Icon name="unlock" /></ToolButton>
        <FieldLabel htmlFor="h" $w={14}>H:</FieldLabel><Spin id="h" value="400,000" w={105} />
        <VRule $m={1} />
        <Drop label="Unit" value="px" w={60} />
        <VRule $m={7} />
        <ButtonPack>
          {['scaleStroke', 'scaleCorners', 'scaleGradient', 'scalePattern'].map((n) => <ToolButton key={n} $w={36} $h={34} $framed $active aria-label={n}><Icon name={n} /></ToolButton>)}
        </ButtonPack>
        <Grow />
        <ToolButton $w={38} $h={34} aria-label="Snap"><Icon name="snap" /></ToolButton>
        <ToolButton $w={36} $h={34} $framed aria-label="Snap options"><Icon name="left" /></ToolButton>
      </Toolbar>
      <Main>
        <Toolbox>
          {TOOLS.map((group, g) => (
            <React.Fragment key={g}>
              {g > 0 && <HRule />}
              {group.map((n) => <ToolButton key={n} $w={32} $h={32} $framed={n === 'pointer'} $active={n === 'pointer'} aria-label={n}><Icon name={n} /></ToolButton>)}
            </React.Fragment>
          ))}
        </Toolbox>
        <Editor>
          <GuideLock><ToolButton $w={18} $h={26} $framed $active aria-label="Lock guides"><Icon name="lock" /></ToolButton></GuideLock>
          <HRuler />
          <ToolButton $w={18} $h={26} $framed aria-label="Zoom 1:1"><Icon name="oneToOne" /></ToolButton>
          <VRuler />
          <Canvas><Scene /></Canvas>
          <VTrack><Thumb /></VTrack>
          <HTrack><Thumb $horizontal /></HTrack>
          <ToolButton $w={18} $h={26} $framed aria-label="Color management"><Icon name="cms" /></ToolButton>
        </Editor>
        <DockHandle><Dot /><Dot /><Dot /></DockHandle>
        <ExportDock />
        <Commands>
          {COMMANDS.map((group, g) => (
            <React.Fragment key={g}>
              {g > 0 && <RuleWide />}
              {group.map((n) => <ToolButton key={n} $w={36} $h={35} aria-label={n}><Icon name={n} /></ToolButton>)}
            </React.Fragment>
          ))}
          <Grow />
          <ToolButton $w={36} $h={35} aria-label="More"><Icon name="right" /></ToolButton>
        </Commands>
      </Main>
      <Palette>
        <Swatches>
          <Swatch $c="#fff" aria-label="None"><svg width="16" height="16"><path d="M0 0l16 16M16 0L0 16" stroke="#7a1010" strokeWidth="1.500" /></svg></Swatch>
          {COLORS.map((c, i) => <Swatch key={i} $c={`#${c}`} aria-label={c} />)}
        </Swatches>
        <ToolButton $w={31} $h={28} aria-label="Previous colors"><Icon name="up" /></ToolButton>
        <ToolButton $w={31} $h={28} aria-label="Next colors"><Icon name="down" /></ToolButton>
        <ToolButton $w={20} $h={28} $framed aria-label="Palette menu"><Icon name="menu" /></ToolButton>
      </Palette>
      <StatusBar>
        <StyleGrid>
          <span>Fill:</span><FillSwatch aria-label="Fill color" /><span />
          <span>Stroke:</span><Unset>Unset</Unset><span>0,0661</span>
        </StyleGrid>
        <FieldLabel htmlFor="o" $w={19}>O:</FieldLabel><Spin id="o" value="100" w={70} maxed />
        <LayerName>[root]</LayerName>
        <LayerToggles><Icon name="eye" /><Icon name="unlockDim" /></LayerToggles>
        <VRule $m={9} />
        <Message><b>Path</b> 4 nodes; <em>clipped</em> in root. Click selection again to toggle scale/rotation handles.</Message>
        <Grow />
        <VRule $m={9} />
        <div><Pair><span>X:</span><span>245,90</span></Pair><Pair><span>Y:</span><span>88,52</span></Pair></div>
        <FieldLabel htmlFor="z" $w={19}>Z:</FieldLabel><Spin id="z" value="214%" w={88} bw={22} />
        <FieldLabel htmlFor="r" $w={19}>R:</FieldLabel><Spin id="r" value="0,00°" w={95} bw={22} />
      </StatusBar>
    </Window>
  );
}
